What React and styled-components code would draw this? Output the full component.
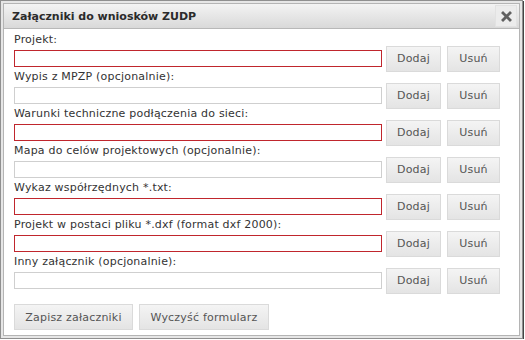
import React from "react";
import styled, { createGlobalStyle } from "styled-components";

const Global = createGlobalStyle`
  body {
    margin: 0;
    background: #fff;
    font-family: "DejaVu Sans", Verdana, sans-serif;
  }
`;

const Frame = styled.div`
  box-sizing: border-box;
  width: 523px;
  height: 339px;
  border: 1px solid #8f8f8f;
  padding: 2px;
  background: #e6e6e6;
  box-shadow: 1px 1px 0 #444;
`;

const Panel = styled.div`
  box-sizing: border-box;
  height: 100%;
  border: 1px solid #b4b4b4;
  background: #fff;
  display: flex;
  flex-direction: column;
`;

const Header = styled.div`
  height: 24px;
  display: flex;
  align-items: center;
  justify-content: space-between;
  padding: 0 2px 0 8px;
  background: linear-gradient(#f3f3f3, #d9d9d9);
  border-bottom: 1px solid #b8b8b8;
`;

const Title = styled.span`
  font-size: 11px;
  font-weight: bold;
  color: #2b2b2b;
`;

const Close = styled.span`
  width: 20px;
  height: 20px;
  display: flex;
  align-items: center;
  justify-content: center;
  background: #ececec;
  border: 1px solid #e2e2e2;
`;

const Body = styled.div`
  padding: 4px 0 0 10px;
  display: flex;
  flex-direction: column;
`;

const Field = styled.div`
  display: flex;
  flex-direction: column;
`;

const Label = styled.label`
  font-size: 11px;
  line-height: 14px;
  letter-spacing: 0.2px;
  color: #333;
`;

const Row = styled.div`
  height: 23px;
  display: flex;
  align-items: center;
`;

const Input = styled.input`
  box-sizing: border-box;
  width: 368px;
  height: 17px;
  margin: 0 4px 0 0;
  border: 1px solid ${({ required }) => (required ? "#c0262d" : "#cfcfcf")};
  background: #fff;
  padding: 0;
`;

const Button = styled.button`
  box-sizing: border-box;
  height: 26px;
  width: ${({ w }) => w}px;
  margin-right: 6px;
  flex: none;
  border: 1px solid #dadada;
  background: linear-gradient(#f4f4f4, #e4e4e4);
  color: #555;
  font-family: "DejaVu Sans", Verdana, sans-serif;
  font-size: 11px;
  letter-spacing: 0.2px;
  padding: 0;
`;

const Footer = styled.div`
  display: flex;
  gap: 6px;
  margin-top: 12px;
`;

const FooterButton = styled(Button)`
  margin: 0;
`;

const fields = [
  ["Projekt:", true],
  ["Wypis z MPZP (opcjonalnie):", false],
  ["Warunki techniczne podłączenia do sieci:", true],
  ["Mapa do celów projektowych (opcjonalnie):", false],
  ["Wykaz współrzędnych *.txt:", true],
  ["Projekt w postaci pliku *.dxf (format dxf 2000):", true],
  ["Inny załącznik (opcjonalnie):", false],
];

export default function App() {
  return (
    <>
      <Global />
      <Frame>
        <Panel>
          <Header>
            <Title>Załączniki do wniosków ZUDP</Title>
            <Close>
              <svg width="11" height="11" viewBox="0 0 11 11">
                <path d="M2 2L9 9M9 2L2 9" stroke="#606060" strokeWidth="2.8" strokeLinecap="square" />
              </svg>
            </Close>
          </Header>
          <Body>
            {fields.map(([label, req]) => (
              <Field key={label}>
                <Label>{label}</Label>
                <Row>
                  <Input required={req} readOnly />
                  <Button w={55}>Dodaj</Button>
                  <Button w={53}>Usuń</Button>
                </Row>
              </Field>
            ))}
            <Footer>
              <FooterButton w={119}>Zapisz załaczniki</FooterButton>
              <FooterButton w={130}>Wyczyść formularz</FooterButton>
            </Footer>
          </Body>
        </Panel>
      </Frame>
    </>
  );
}
